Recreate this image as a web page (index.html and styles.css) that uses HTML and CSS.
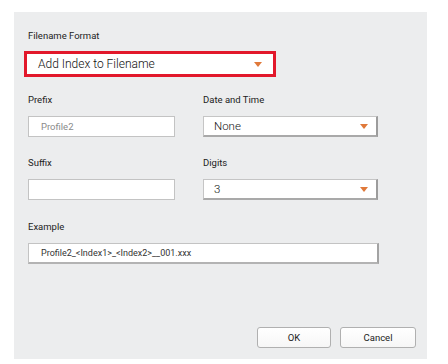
FILE: index.html
```html
<!DOCTYPE html>
<html lang="en">
<head>
    <meta charset="UTF-8">
    <title>Filename Format</title>
    <link rel="stylesheet" href="styles.css">
</head>
<body>
    <div class="dialog">
        <div class="field-label format-label">Filename Format</div>
        <div class="select format-select">
            <span class="select-text">Add Index to Filename</span>
            <span class="arrow"></span>
        </div>

        <div class="grid">
            <div class="cell">
                <div class="field-label">Prefix</div>
                <div class="input"><span class="placeholder">Profile2</span></div>
            </div>
            <div class="cell">
                <div class="field-label">Date and Time</div>
                <div class="select small-select">
                    <span class="select-text">None</span>
                    <span class="arrow"></span>
                </div>
            </div>
            <div class="cell">
                <div class="field-label">Suffix</div>
                <div class="input"></div>
            </div>
            <div class="cell">
                <div class="field-label">Digits</div>
                <div class="select small-select">
                    <span class="select-text">3</span>
                    <span class="arrow"></span>
                </div>
            </div>
        </div>

        <div class="field-label example-label">Example</div>
        <div class="example-box">Profile2_&lt;Index1&gt;_&lt;Index2&gt;__001.xxx</div>

        <div class="buttons">
            <button class="btn">OK</button>
            <button class="btn btn-cancel">Cancel</button>
        </div>
    </div>
</body>
</html>
```
FILE: styles.css
```css
body {
    margin: 0;
    padding: 0;
    background-color: white;
    font-family: Roboto, "Liberation Sans", sans-serif;
}

.dialog {
    display: flex;
    flex-direction: column;
    box-sizing: border-box;
    width: 413px;
    height: 347px;
    margin: 12px 0 0 14px;
    padding: 18px 0 11px 14px;
    background-color: #ecedee;
}

.field-label {
    font-size: 9.5px;
    line-height: 12px;
    height: 12px;
    color: #222;
    margin-bottom: 10px;
}

.format-label {
    margin-bottom: 9px;
}

.select {
    display: flex;
    align-items: center;
    justify-content: space-between;
    box-sizing: border-box;
    background-color: white;
    color: #111;
    font-weight: 300;
}

.format-select {
    width: 252px;
    height: 26px;
    margin-left: -4px;
    border: 3px solid #e2182b;
    padding: 0 11px 0 11px;
    font-size: 12px;
}

.small-select {
    width: 175px;
    height: 21px;
    border: 1px solid #c5c5c5;
    border-right: 2px solid #9c9c9c;
    border-bottom: 2px solid #a9a9a9;
    padding: 0 8px 0 10px;
    font-size: 11.5px;
}

.arrow {
    width: 0;
    height: 0;
    border-left: 4px solid transparent;
    border-right: 4px solid transparent;
    border-top: 5px solid #e0793a;
}

.grid {
    display: grid;
    grid-template-columns: 147px 175px;
    column-gap: 28px;
    row-gap: 20px;
    margin-top: 17px;
}

.input {
    display: flex;
    align-items: center;
    box-sizing: border-box;
    width: 147px;
    height: 21px;
    border: 1px solid #c3c3c3;
    background-color: white;
    padding-left: 12px;
}

.placeholder {
    font-size: 9.5px;
    color: #8a8a8a;
}

.example-label {
    margin-top: 21px;
}

.example-box {
    display: flex;
    align-items: center;
    box-sizing: border-box;
    width: 351px;
    height: 21px;
    border: 1px solid #c3c3c3;
    border-right: 2px solid #a3a3a3;
    border-bottom: 2px solid #b3b3b3;
    background-color: white;
    padding-left: 12px;
    font-size: 9px;
    color: #333;
}

.buttons {
    display: flex;
    justify-content: flex-end;
    gap: 9px;
    margin-top: auto;
    padding-right: 11px;
}

.btn {
    width: 74px;
    height: 21px;
    border: 1px solid #b0b0b0;
    border-radius: 3px;
    background: linear-gradient(to bottom, #ffffff, #f6f6f6);
    font-family: Roboto, "Liberation Sans", sans-serif;
    font-size: 9.5px;
    color: #222;
    padding: 0;
}

.btn-cancel {
    width: 76px;
}
```
